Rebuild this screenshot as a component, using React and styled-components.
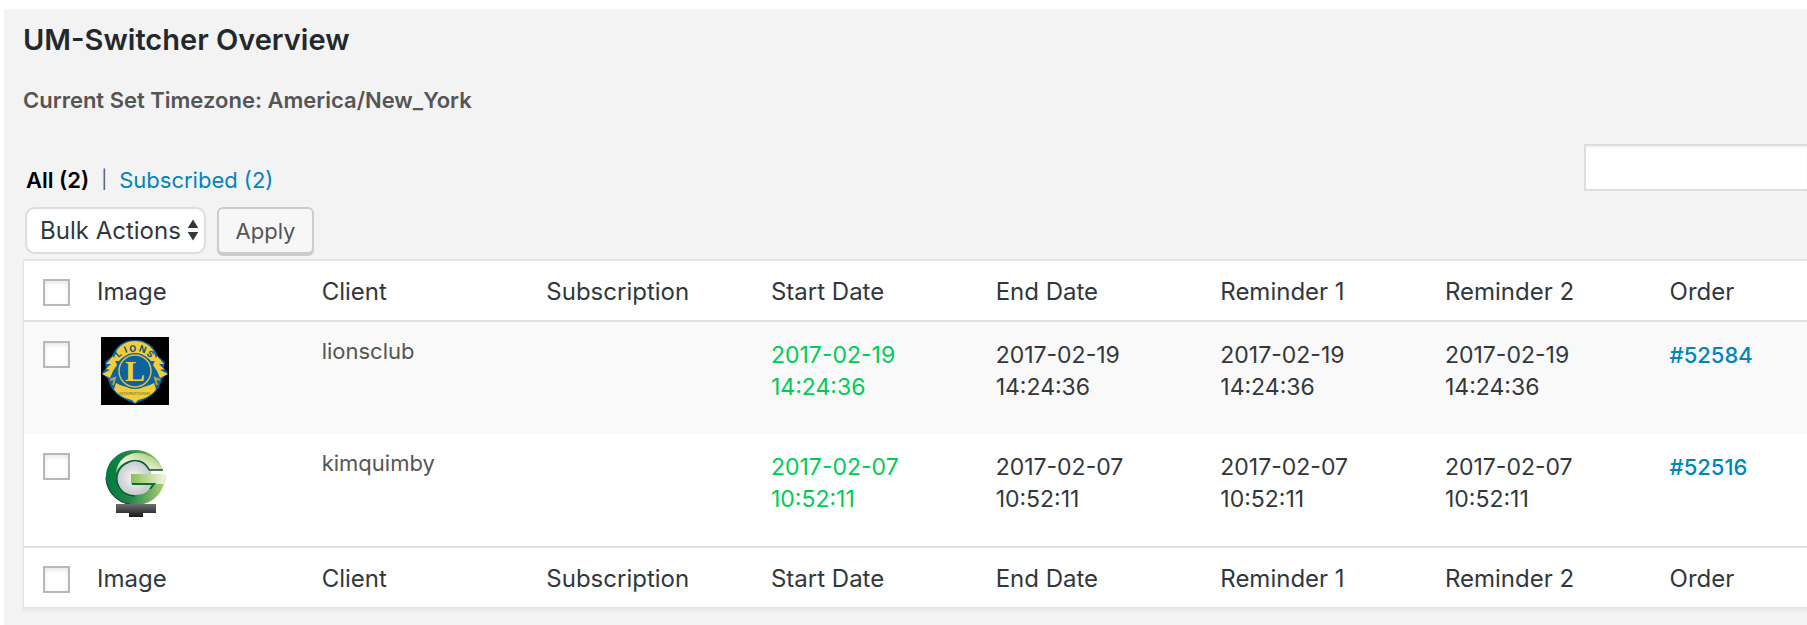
import styled, { createGlobalStyle, css } from "styled-components";

const columns = [
  "Image",
  "Client",
  "Subscription",
  "Start Date",
  "End Date",
  "Reminder 1",
  "Reminder 2",
  "Order",
];

const App = () => {
  return (
    <>
      <GlobalStyle />
      <Page>
        <Title>UM-Switcher Overview</Title>
        <Timezone>Current Set Timezone: America/New_York</Timezone>
        <Toolbar>
          <Filters>
            <FilterLink href="#all" $current>
              All (2)
            </FilterLink>
            <Divider>|</Divider>
            <FilterLink href="#subscribed">Subscribed (2)</FilterLink>
          </Filters>
          <Search type="search" aria-label="Search" />
        </Toolbar>
        <Actions>
          <SelectBox>
            <Select aria-label="Bulk Actions">
              <option>Bulk Actions</option>
            </Select>
            <Arrows viewBox="0 0 12 22" aria-hidden="true">
              <path d="M6 0.5 11.3 9H0.7ZM6 21.5 0.7 13H11.3Z" fill="#32373c" />
            </Arrows>
          </SelectBox>
          <Button type="button">Apply</Button>
        </Actions>
        <Table>
          <thead>
            <HeadingRow place="top" />
          </thead>
          <tbody>
            <ClientRow
              logo={<LionsLogo />}
              client="lionsclub"
              date="2017-02-19"
              time="14:24:36"
              order="#52584"
            />
            <ClientRow
              logo={<QuimbyLogo />}
              client="kimquimby"
              date="2017-02-07"
              time="10:52:11"
              order="#52516"
            />
          </tbody>
          <tfoot>
            <HeadingRow place="bottom" />
          </tfoot>
        </Table>
      </Page>
    </>
  );
};

const HeadingRow = ({ place }) => (
  <tr>
    <CheckHeading>
      <Checkbox type="checkbox" aria-label={`Select all, ${place}`} />
    </CheckHeading>
    {columns.map((name) => (
      <Heading key={name} $last={name === "Order"}>
        {name}
      </Heading>
    ))}
  </tr>
);

const ClientRow = ({ logo, client, date, time, order }) => {
  const stamp = (
    <>
      {date}
      <br />
      {time}
    </>
  );

  return (
    <Row>
      <CheckCell>
        <Checkbox type="checkbox" aria-label={`Select ${client}`} />
      </CheckCell>
      <LogoCell>{logo}</LogoCell>
      <ClientCell>{client}</ClientCell>
      <Cell />
      <DateCell $active>{stamp}</DateCell>
      <DateCell>{stamp}</DateCell>
      <DateCell>{stamp}</DateCell>
      <DateCell>{stamp}</DateCell>
      <Cell>
        <OrderLink href={order}>{order}</OrderLink>
      </Cell>
    </Row>
  );
};

const LionsLogo = () => (
  <Logo viewBox="0 0 68 68" role="img" aria-label="Lions">
    <path d="M0 0H68V68H0Z" fill="#000" />
    <path
      d="M34 3C46 3 53 9 57 19L64 25 63 31 67 36 61 42C59 51 54 57 45 62L34 67 23 62C14 57 9 51 7 42L1 36 5 31 4 25 11 19C15 9 22 3 34 3Z"
      fill="#0b64a0"
    />
    <path
      d="M12 24 16 13C25 1 43 1 52 13L56 24 50 24C41 14 27 14 18 24Z"
      fill="#f3cb3b"
    />
    <path
      d="M12 19 5 27 10 27 5 32 9 33 1 37 9 41 12 34 16 28ZM56 19 63 27 58 27 63 32 59 33 67 37 59 41 56 34 52 28Z"
      fill="#f3cb3b"
    />
    <path
      d="M9 43 14 41 12 48M59 43 54 41 56 48"
      fill="none"
      stroke="#b8a34c"
      strokeWidth="2"
    />
    <path
      d="M15 46C25 52 43 52 53 46L55 52C51 59 42 62 37 63L34 66 31 63C26 62 17 59 13 52Z"
      fill="#f3cb3b"
    />
    <circle cx="34" cy="34" r="18" fill="#0b64a0" />
    <circle
      cx="34"
      cy="34"
      r="16"
      fill="none"
      stroke="#e5c43f"
      strokeWidth="1.4"
    />
    <text
      x="17.5 24.5 28.5 37.5 45"
      y="21 16 15 14 17.5"
      rotate="-42 -22 -4 20 40"
      fontSize="9"
      fontWeight="700"
      fill="#0b4f7c"
    >
      LIONS
    </text>
    <text
      x="34"
      y="44"
      fontFamily="Liberation Serif, serif"
      fontSize="30"
      fontWeight="700"
      fill="#f9cf37"
      textAnchor="middle"
    >
      L
    </text>
    <text x="34" y="58" fontSize="4" fill="#5c6a3d" textAnchor="middle">
      INTERNATIONAL
    </text>
  </Logo>
);

const QuimbyLogo = () => (
  <Logo viewBox="0 0 68 68" role="img" aria-label="Kim Quimby">
    <defs>
      <linearGradient id="ring" x1="0" y1="0" x2="1" y2="0">
        <stop offset="0" stopColor="#007a43" />
        <stop offset="0.4" stopColor="#23864a" />
        <stop offset="1" stopColor="#b3d477" />
      </linearGradient>
      <linearGradient id="bar" x1="0" y1="0" x2="1" y2="0">
        <stop offset="0" stopColor="#8fbd52" />
        <stop offset="1" stopColor="#f2f7e2" />
      </linearGradient>
      <linearGradient id="shine" x1="0" y1="1" x2="1" y2="0">
        <stop offset="0" stopColor="#a7ce77" />
        <stop offset="0.4" stopColor="#f1f6dd" />
        <stop offset="1" stopColor="#96c35f" />
      </linearGradient>
      <radialGradient id="disc">
        <stop offset="0" stopColor="#f8f8fa" />
        <stop offset="1" stopColor="#c5c7cc" />
      </radialGradient>
      <linearGradient id="stand" x1="0" y1="0" x2="0" y2="1">
        <stop offset="0" stopColor="#707070" />
        <stop offset="1" stopColor="#161616" />
      </linearGradient>
    </defs>
    <circle cx="33" cy="29" r="18" fill="url(#disc)" />
    <path
      d="M62 21C57 8 47 1 34 1 17 1 5 13 5 28 5 44 18 56 34 56 52 56 63 44 65 26H53L50 36C47 43 42 46 34 46 24 46 16 39 16 29 16 19 24 12 34 12 40 12 45 15 48 21Z"
      fill="url(#ring)"
    />
    <path
      d="M15 24C16 11 27 3 38 4 49 5 57 11 61 20H49C45 14 40 10 32 11 24 12 18 17 15 24Z"
      fill="url(#shine)"
    />
    <path
      d="M48 21C44 12 35 10 28 13 17 17 13 29 18 38 21 44 27 47 34 47M48 21H62"
      fill="none"
      stroke="#075d36"
      strokeWidth="1.4"
    />
    <path d="M5 28C5 43 17 54 29 55" fill="none" stroke="#183d29" />
    <path d="M30 25H65L63 35H30Z" fill="url(#bar)" />
    <path d="M31 35H53L49 40" fill="none" stroke="#08713b" strokeWidth="2" />
    <path d="M15 55H55V64H42V68H28V64H15Z" fill="url(#stand)" />
  </Logo>
);

const GlobalStyle = createGlobalStyle`
  * {
    box-sizing: border-box;
  }
  body {
    margin: 0;
    background: #fff;
    color: #555;
    font-family: Inter, "Liberation Sans", sans-serif;
    font-size: 22px;
    line-height: 32px;
  }
  input, select, button {
    font: inherit;
  }
`;

const Page = styled.main`
  margin: 9px 0 0 4px;
  padding: 14px 0 16px 19px;
  min-height: calc(100vh - 9px);
  background: #f3f3f3;
`;

const Title = styled.h1`
  margin: 0;
  color: #23282d;
  font-size: 29px;
  font-weight: 600;
  line-height: 34px;
`;

const Timezone = styled.h2`
  margin: 27px 0 0;
  font-size: 22px;
  font-weight: 600;
  line-height: 32px;
`;

const Toolbar = styled.div`
  display: flex;
  align-items: flex-end;
  justify-content: space-between;
  margin-top: 28px;
`;

const Filters = styled.nav`
  display: flex;
  gap: 12px;
  padding-left: 3px;
  margin-top: 20px;
`;

const FilterLink = styled.a`
  color: #0085ba;
  text-decoration: none;
  ${({ $current }) =>
    $current &&
    css`
      color: #000;
      font-weight: 600;
    `}
`;

const Divider = styled.span`
  font-size: 18px;
`;

const Search = styled.input`
  align-self: flex-start;
  width: 223px;
  height: 47px;
  border: 2px solid #ddd;
  border-right: 0;
  background: #fff;
  box-shadow: inset 0 2px 2px rgba(0, 0, 0, 0.05);
`;

const Actions = styled.div`
  display: flex;
  align-items: flex-start;
  gap: 11px;
  margin: 11px 0 5px 2px;
`;

const SelectBox = styled.div`
  position: relative;
`;

const Select = styled.select`
  appearance: none;
  display: block;
  width: 181px;
  height: 47px;
  padding: 0 16px 0 13px;
  border: 2px solid #ddd;
  border-radius: 10px;
  background: #fff;
  color: #32373c;
  font-size: 24px;
`;

const Arrows = styled.svg`
  position: absolute;
  top: 12px;
  right: 7px;
  width: 12px;
  height: 22px;
  pointer-events: none;
`;

const Button = styled.button`
  width: 97px;
  height: 47px;
  padding: 0;
  border: 2px solid #ccc;
  border-radius: 6px;
  background: #f7f7f7;
  color: #555;
  box-shadow: 0 2px 0 #ccc;
`;

const Table = styled.table`
  width: 100%;
  table-layout: fixed;
  border-spacing: 0;
  border: 2px solid #e5e5e5;
  border-right: 0;
  border-left-width: 1px;
  background: #fff;
  box-shadow: 0 2px 2px rgba(0, 0, 0, 0.04);
  thead th {
    border-bottom: 2px solid #e1e1e1;
  }
  tfoot th {
    border-top: 2px solid #e1e1e1;
  }
`;

const Heading = styled.th`
  width: ${({ $last }) => ($last ? "auto" : "12.6%")};
  height: 61px;
  padding: 2px 0 0 16px;
  color: #32373c;
  font-size: 24px;
  font-weight: 400;
  text-align: left;
`;

const CheckHeading = styled.th`
  width: 57px;
  padding: 18px 0 0 19px;
  text-align: left;
  vertical-align: top;
`;

const Row = styled.tr`
  height: 112px;
  &:nth-child(odd) {
    background: #f9f9f9;
  }
`;

const Cell = styled.td`
  padding: 17px 0 0 16px;
  color: #32373c;
  vertical-align: top;
`;

const DateCell = styled(Cell)`
  color: ${({ $active }) => ($active ? "#0c5" : "#32373c")};
  font-size: 23px;
`;

const CheckCell = styled(Cell)`
  padding: 19px 0 0 19px;
`;

const LogoCell = styled(Cell)`
  padding: 15px 0 0 20px;
`;

const ClientCell = styled(Cell)`
  padding-top: 13px;
  color: #555;
`;

const Checkbox = styled.input`
  appearance: none;
  display: block;
  width: 27px;
  height: 27px;
  margin: 0;
  border: 2px solid #b4b9be;
  background: #fff;
  box-shadow: inset 0 2px 4px rgba(0, 0, 0, 0.1);
`;

const OrderLink = styled.a`
  color: #0085ba;
  font-weight: 500;
  text-decoration: none;
`;

const Logo = styled.svg`
  display: block;
  width: 68px;
  height: 68px;
`;

export default App;
